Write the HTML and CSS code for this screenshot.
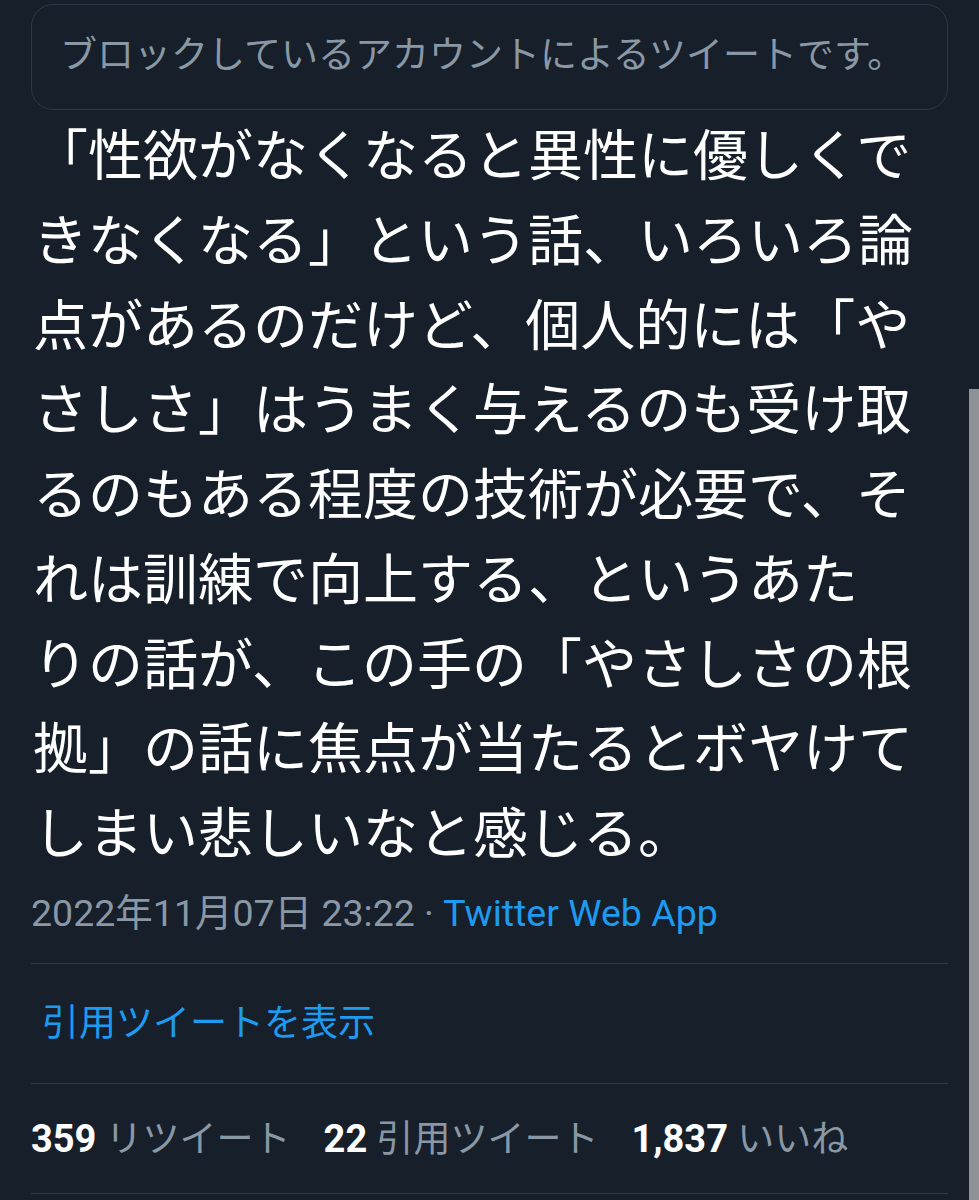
FILE: index.html
```html
<!DOCTYPE html>
<html lang="ja">
<head>
<meta charset="utf-8">
<link rel="stylesheet" href="styles.css">
</head>
<body>
<div class="page">
  <div class="blocked">ブロックしているアカウントによるツイートです。</div>
  <p class="tweet">「性欲がなくなると異性に優しくで<br>きなくなる」という話、いろいろ論<br>点があるのだけど、個人的には「や<br>さしさ」はうまく与えるのも受け取<br>るのもある程度の技術が必要で、そ<br>れは訓練で向上する、というあた<br>りの話が、この手の「やさしさの根<br>拠」の話に焦点が当たるとボヤけて<br>しまい悲しいなと感じる。</p>
  <div class="meta">2022年11月07日 23:22 · <span class="link">Twitter Web App</span></div>
  <div class="row quote"><span class="link">引用ツイートを表示</span></div>
  <div class="row stats">
    <span class="stat"><b>359</b> リツイート</span>
    <span class="stat"><b>22</b> 引用ツイート</span>
    <span class="stat"><b>1,837</b> いいね</span>
  </div>
</div>
<div class="scrollbar"></div>
</body>
</html>
```
FILE: styles.css
```css
html, body {
  margin: 0;
  padding: 0;
  background: #161f2a;
  height: 100%;
  overflow: hidden;
}
body {
  font-family: Roboto, "Noto Sans CJK JP", sans-serif;
  color: #ffffff;
}
.page {
  padding: 4px 31px 0 31px;
  width: 917px;
}
.blocked {
  box-sizing: border-box;
  height: 106px;
  border: 1px solid #2c3844;
  border-radius: 22px;
  padding: 0 0 10px 28px;
  display: flex;
  align-items: center;
  font-size: 37px;
  color: #8a98a5;
  font-family: "Noto Sans CJK JP", sans-serif;
}
.tweet {
  margin: -1px 0 0 2px;
  font-family: "Noto Sans CJK JP", sans-serif;
  font-size: 55px;
  line-height: 84.75px;
  color: #ffffff;
}
.meta {
  margin-top: 20px;
  font-size: 37.5px;
  line-height: 42px;
  color: #8a98a5;
  padding-bottom: 29px;
  border-bottom: 1px solid #2f3a45;
}
.link {
  color: #1d9bf0;
}
.row {
  border-bottom: 1px solid #2f3a45;
  display: flex;
  align-items: center;
}
.quote {
  height: 119px;
  padding-left: 11px;
  font-size: 37px;
}
.quote .link {
  margin-bottom: 6px;
}
.stats {
  height: 109px;
  gap: 33px;
  font-size: 37px;
  color: #8a98a5;
}
.stat {
  margin-bottom: 4px;
}
.stats b {
  color: #ffffff;
  font-weight: 700;
  font-size: 38px;
}
.scrollbar {
  position: absolute;
  right: 0;
  top: 389px;
  bottom: 0;
  width: 10px;
  background: #8e9296;
}
```
